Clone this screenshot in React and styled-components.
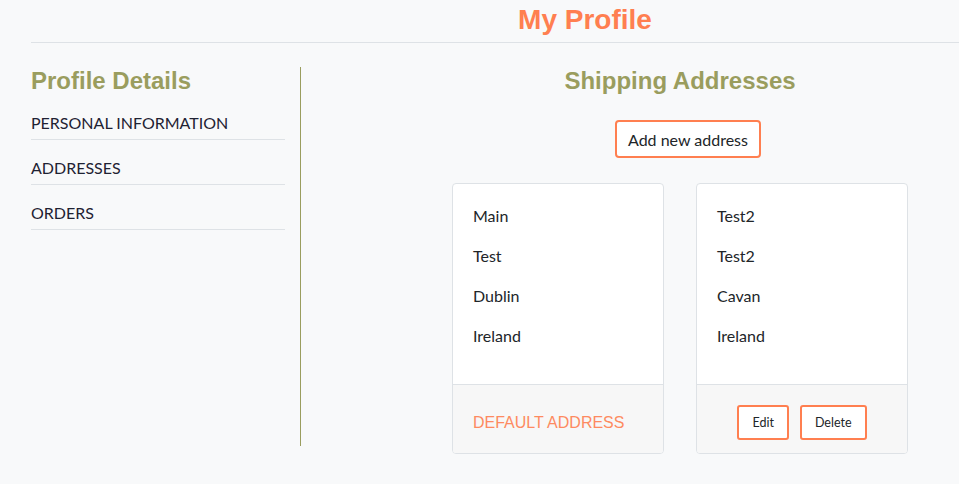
import React from 'react'
import styled, { createGlobalStyle } from 'styled-components'

const COLORS = {
  BG: '#f8f9fa',
  CORAL: '#ff7f50',
  OLIVE: '#9a9d5e',
  TEXT: '#212529',
  BORDER: '#dee2e6',
  FOOTER: '#f7f7f7'
}

const GlobalStyle = createGlobalStyle`
  html, body {
    margin: 0;
    padding: 0;
    background: ${COLORS.BG};
    overflow: hidden;
  }
  body {
    font-family: Lato, "Liberation Sans", sans-serif;
    color: ${COLORS.TEXT};
  }
`

const addresses = [
  { id: 1, lines: ['Main', 'Test', 'Dublin', 'Ireland'], isDefault: true },
  { id: 2, lines: ['Test2', 'Test2', 'Cavan', 'Ireland'], isDefault: false }
]

const App = () => {
  return (
    <>
      <GlobalStyle />
      <Page>
        <Header>
          <PageTitle>My Profile</PageTitle>
        </Header>
        <Main>
          <Sidebar>
            <SideTitle>Profile Details</SideTitle>
            <Menu>
              <MenuItem>PERSONAL INFORMATION</MenuItem>
              <MenuItem>ADDRESSES</MenuItem>
              <MenuItem>ORDERS</MenuItem>
            </Menu>
          </Sidebar>
          <Content>
            <SectionTitle>Shipping Addresses</SectionTitle>
            <AddButton>Add new address</AddButton>
            <CardGrid>
              {addresses.map(a => (
                <Card key={a.id}>
                  <CardBody>
                    {a.lines.map((l, i) => <Line key={i}>{l}</Line>)}
                  </CardBody>
                  <CardFooter $isDefault={a.isDefault}>
                    {a.isDefault
                      ? <DefaultLabel>DEFAULT ADDRESS</DefaultLabel>
                      : (
                        <>
                          <SmallButton>Edit</SmallButton>
                          <SmallButton>Delete</SmallButton>
                        </>
                      )}
                  </CardFooter>
                </Card>
              ))}
            </CardGrid>
          </Content>
        </Main>
      </Page>
    </>
  )
}

const Page = styled.div`
  padding-left: 31px;
  min-height: 484px;
`

const Header = styled.header`
  border-bottom: 1px solid ${COLORS.BORDER};
  height: 42px;
  padding-left: 180px;
`

const PageTitle = styled.h1`
  margin: 0;
  padding-top: 4px;
  text-align: center;
  font-family: "Liberation Sans", Arial, sans-serif;
  font-weight: 700;
  font-size: 28px;
  line-height: 32px;
  color: ${COLORS.CORAL};
`

const Main = styled.div`
  display: flex;
  padding-top: 24px;
`

const Sidebar = styled.aside`
  flex: none;
  width: 254px;
  padding-right: 15px;
  height: 379px;
  border-right: 1px solid ${COLORS.OLIVE};
`

const SideTitle = styled.h2`
  margin: 0 0 13px;
  font-family: "Liberation Sans", Arial, sans-serif;
  font-weight: 700;
  font-size: 24px;
  line-height: 28px;
  color: ${COLORS.OLIVE};
`

const Menu = styled.ul`
  list-style: none;
  margin: 0;
  padding: 0;
  width: 254px;
`

const MenuItem = styled.li`
  font-size: 16px;
  line-height: 20px;
  padding: 5px 0 6px;
  margin-bottom: 13px;
  border-bottom: 1px solid ${COLORS.BORDER};
  color: #1f2233;
`

const Content = styled.section`
  flex: 1;
  min-width: 0;
  padding-left: 100px;
  display: flex;
  flex-direction: column;
  align-items: center;
`

const SectionTitle = styled.h2`
  margin: 0;
  font-family: "Liberation Sans", Arial, sans-serif;
  font-weight: 700;
  font-size: 24px;
  line-height: 28px;
  color: ${COLORS.OLIVE};
`

const AddButton = styled.button`
  margin: 25px 0 0 16px;
  width: 146px;
  height: 38px;
  background: #fff;
  border: 2px solid ${COLORS.CORAL};
  border-radius: 4px;
  font-family: Lato, sans-serif;
  font-size: 16px;
  color: ${COLORS.TEXT};
  padding: 0;
`

const CardGrid = styled.div`
  display: flex;
  gap: 32px;
  margin-top: 25px;
`

const Card = styled.div`
  width: 212px;
  height: 271px;
  box-sizing: border-box;
  border: 1px solid ${COLORS.BORDER};
  border-radius: 4px;
  background: #fff;
  display: flex;
  flex-direction: column;
  overflow: hidden;
`

const CardBody = styled.div`
  flex: none;
  height: 201px;
  padding: 22px 20px 0;
  box-sizing: border-box;
  border-bottom: 1px solid ${COLORS.BORDER};
`

const Line = styled.div`
  font-size: 16px;
  line-height: 20px;
  margin-bottom: 20px;
`

const CardFooter = styled.div`
  flex: 1;
  background: ${COLORS.FOOTER};
  display: flex;
  align-items: center;
  justify-content: ${p => (p.$isDefault ? 'flex-start' : 'center')};
  gap: 11px;
  padding: 7px 20px 0;
`

const DefaultLabel = styled.span`
  font-family: "Liberation Sans", Arial, sans-serif;
  font-size: 16px;
  color: ${COLORS.CORAL};
  opacity: 0.9;
`

const SmallButton = styled.button`
  height: 35px;
  padding: 0 13px;
  background: #fff;
  border: 2px solid ${COLORS.CORAL};
  border-radius: 3px;
  font-family: Lato, sans-serif;
  font-size: 12.5px;
  color: ${COLORS.TEXT};
`

export default App
